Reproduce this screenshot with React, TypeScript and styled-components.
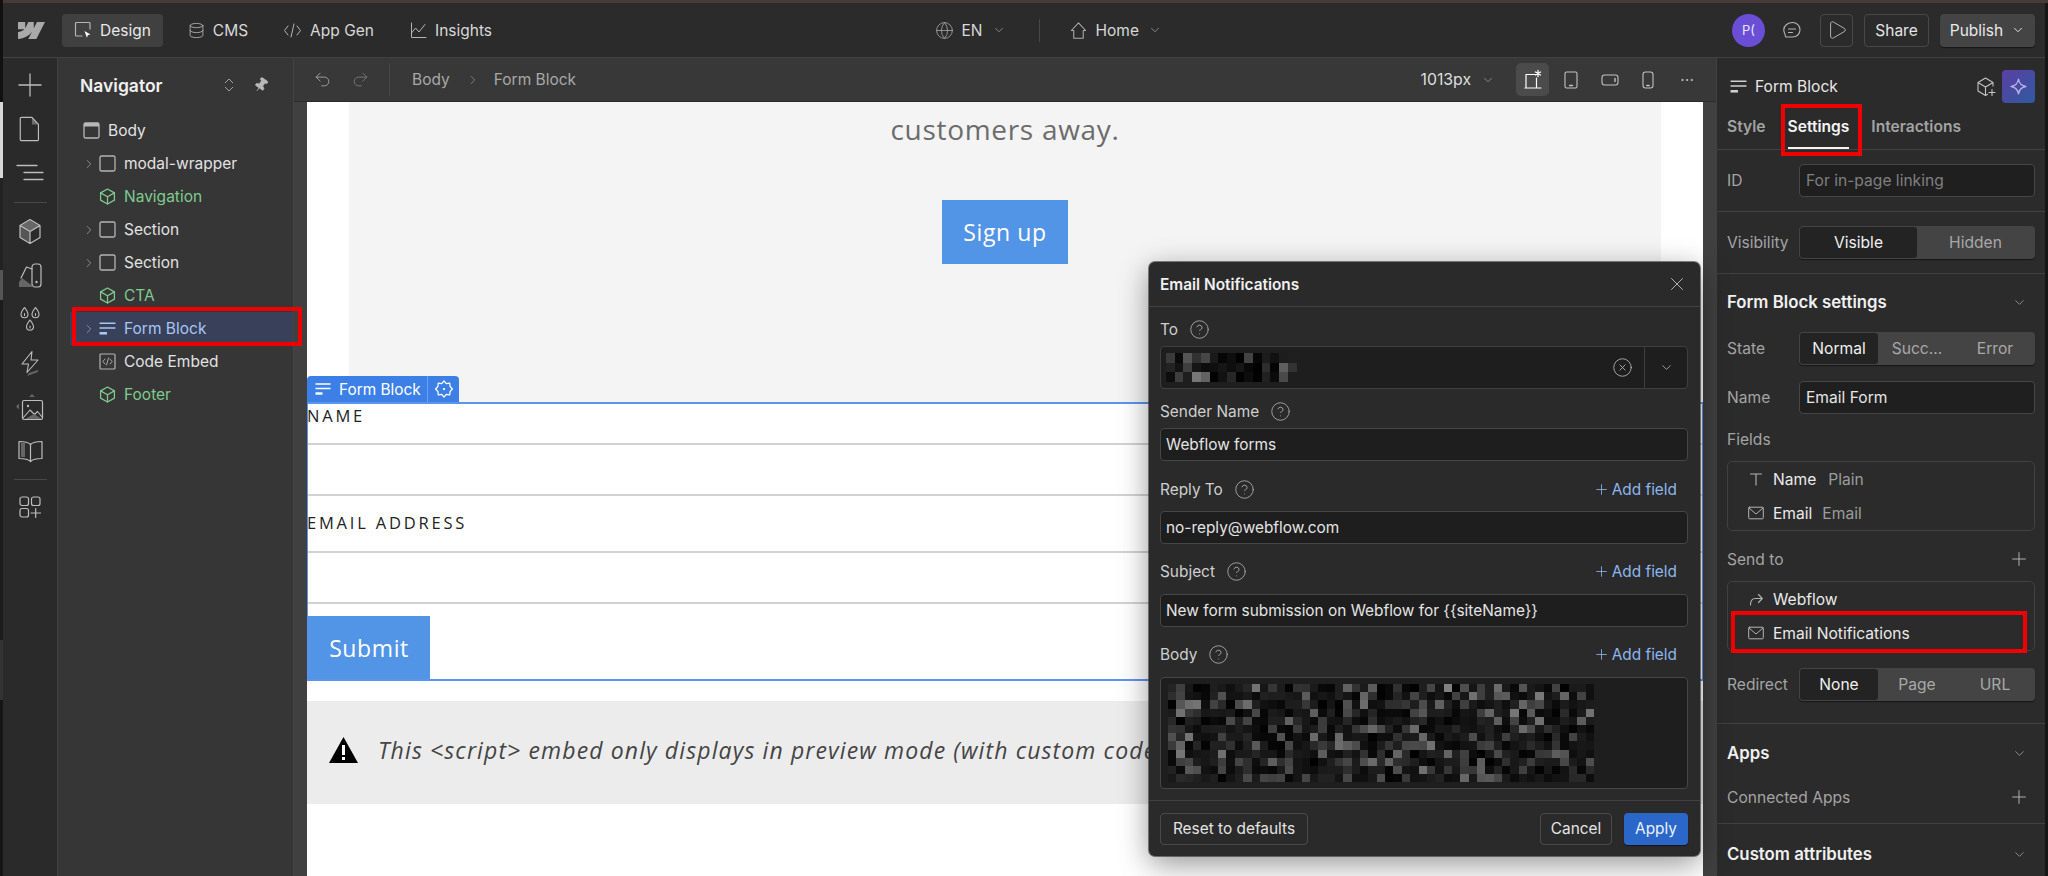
import React from "react";
import styled, { createGlobalStyle } from "styled-components";
import {
  Database, Globe, ChevronDown, ChevronRight, ChevronsUpDown, Undo2, Redo2, Plus, X,
  CircleHelp, CircleX, Play, Pin, Ellipsis,
} from "lucide-react";

const GlobalStyle = createGlobalStyle`
  html, body { margin: 0; padding: 0; background: #1a1a1a; }
  * { box-sizing: border-box; }
  body { font-family: Inter, "Liberation Sans", sans-serif; font-size: 15.5px; color: #e6e6e6; -webkit-font-smoothing: antialiased; }
`;

const Shell = styled.div`
  position: relative; width: 2048px; height: 876px; overflow: hidden;
  display: flex; flex-direction: column; background: #161616;
  &::before {
    content: ""; position: absolute; left: 0; top: 0; width: 3px; height: 100%;
    background: linear-gradient(#111 0 102px, #d8d8d8 102px 178px, #222 178px 270px, #555 270px 300px, #1c1c1c 300px 640px, #333 640px 700px, #161616 700px);
  }
`;
const TopStrip = styled.div`height: 3px; background: #4b3838; flex: none;`;
const Frame = styled.div`flex: 1; min-height: 0; display: flex; flex-direction: column; padding: 0 3px;`;

/* top bar */
const TopBar = styled.header`
  height: 55px; flex: none; display: flex; align-items: center; background: #2b2b2b; border-bottom: 1px solid #414141;
`;
const LeftGroup = styled.div`width: 931.5px; flex: none; display: flex; align-items: center; padding-left: 15px;`;
const LogoSlot = styled.div`width: 27px; height: 17px; color: #a9a9a9; margin-right: 17px; display: flex;`;
const ModeButton = styled.div<{ $active?: boolean; $w: number }>`
  width: ${p => p.$w}px; height: 33px; border-radius: 4px; display: flex; align-items: center; justify-content: center; gap: 8px;
  background: ${p => (p.$active ? "#404040" : "transparent")}; color: ${p => (p.$active ? "#e8e8e8" : "#d8d8d8")};
  font-size: 15.5px;
  svg { color: #b4b4b4; flex: none; }
`;
const CenterGroup = styled.div`display: flex; align-items: center; color: #d8d8d8; font-size: 15.5px; svg { color: #aaa; flex: none; }`;
const CenterText = styled.span<{ $ml: number }>`margin: 0 9px 0 ${p => p.$ml}px;`;
const VRule = styled.div`width: 1px; height: 23px; background: #484848; margin: 0 29px 0 33px;`;
const RightGroup = styled.div`margin-left: auto; display: flex; align-items: center; padding-right: 10px;`;
const Avatar = styled.div`
  width: 33px; height: 33px; border-radius: 50%; background: #6a4fd6; color: #e9e6fb; font-size: 13px;
  display: flex; align-items: center; justify-content: center; margin-right: 17px;
`;
const CommentSlot = styled.div`width: 20px; display: flex; color: #b6b6b6; margin-right: 18px;`;
const GhostButton = styled.div<{ $w: number; $ml?: number }>`
  width: ${p => p.$w}px; height: 33px; border: 1px solid #484848; border-radius: 4px; margin-left: ${p => p.$ml ?? 0}px;
  display: flex; align-items: center; justify-content: center; color: #e4e4e4; font-size: 15.5px; svg { color: #bdbdbd; }
`;
const PublishButton = styled.div`
  width: 95px; height: 33px; border-radius: 4px; background: #444; margin-left: 11px; box-shadow: 0 1px 1px rgba(0,0,0,.5);
  display: flex; align-items: center; justify-content: center; gap: 8px; color: #e8e8e8; font-size: 15.5px;
`;

const Main = styled.div`flex: 1; min-height: 0; display: flex;`;

/* rail */
const Rail = styled.nav`
  width: 55px; flex: none; background: #2a2a2a; border-right: 1px solid #414141; padding-top: 5px;
  display: flex; flex-direction: column; align-items: center;
`;
const RailItem = styled.div`height: 44px; width: 100%; display: flex; align-items: center; justify-content: center; color: #bdbdbd;`;
const RailRule = styled.div<{ $h: number }>`
  height: ${p => p.$h}px; width: 33px; display: flex; align-items: center;
  &::after { content: ""; display: block; width: 100%; height: 1px; background: #484848; }
`;

/* navigator */
const Navigator = styled.aside`
  width: 236px; flex: none; background: #363636; border-right: 1px solid #444; position: relative; z-index: 3;
`;
const NavHeader = styled.div`height: 56px; display: flex; align-items: center; padding: 0 24px 2px 22px; gap: 15px; color: #b8b8b8;`;
const NavTitle = styled.div`flex: 1; font-size: 17.5px; font-weight: 600; color: #f0f0f0;`;
const PinSlot = styled.div`display: flex; transform: rotate(35deg);`;
const TreeRow = styled.div<{ $selected?: boolean; $tone?: "green" }>`
  position: relative; height: 33px; margin-left: 12px; display: flex; align-items: center; font-size: 15.5px;
  color: ${p => (p.$selected ? "#a9c6f4" : p.$tone === "green" ? "#7fcb8f" : "#e2e2e2")};
  background: ${p => (p.$selected ? "#38405a" : "transparent")};
  svg { flex: none; }
`;
const CaretSlot = styled.div`width: 16px; margin-left: 11px; margin-right: 2px; display: flex; justify-content: center; color: #a6a6a6;`;
const TreeIcon = styled.div<{ $root?: boolean }>`
  width: 17px; height: 17px; display: flex; margin-right: 8px; margin-left: ${p => (p.$root ? "-16px" : "0")};
  color: ${p => (p.$root ? "#b8b8b8" : "inherit")};
`;
const PlainTreeIcon = styled(TreeIcon)<{ $gray?: boolean }>`color: ${p => (p.$gray ? "#b4b4b4" : "inherit")};`;
const NavRedMark = styled.div`position: absolute; left: 2px; right: -9px; top: -5px; bottom: -1px; border: 4px solid #f00000;`;

/* canvas */
const CanvasColumn = styled.section`flex: 1; min-width: 0; display: flex; flex-direction: column; background: #404040;`;
const CanvasBar = styled.div`
  height: 44px; flex: none; background: #383838; border-bottom: 1px solid #2a2a2a; display: flex; align-items: center;
  padding: 0 13px 0 19px; color: #a8a8a8; font-size: 15.5px;
`;
const BarIcon = styled.div<{ $w: number; $dim?: boolean }>`
  width: ${p => p.$w}px; display: flex; color: ${p => (p.$dim ? "#7e7e7e" : "#aaa")};
`;
const BarRule = styled.div`width: 1px; height: 33px; background: #484848; margin: 0 22px 0 19px;`;
const Crumb = styled.span``;
const CrumbSep = styled.div`display: flex; margin: 0 14px 0 16px; color: #9c9c9c;`;
const BarSpacer = styled.div`flex: 1;`;
const WidthLabel = styled.span`color: #dfdfdf; font-size: 15.8px; margin-right: 10px;`;
const WidthCaret = styled.div`display: flex; margin-right: 21px; color: #a8a8a8;`;
const DeviceButton = styled.div<{ $active?: boolean; $w: number }>`
  width: ${p => p.$w}px; height: 33px; border-radius: 5px; display: flex; align-items: center; justify-content: center;
  background: ${p => (p.$active ? "#4b4b4b" : "transparent")}; color: ${p => (p.$active ? "#fff" : "#c2c2c2")};
`;
const Gutter = styled.div`flex: 1; min-height: 0; padding: 0 13px; display: flex;`;
const Page = styled.main`flex: 1; background: #fff; display: flex; flex-direction: column; font-family: "Open Sans", Inter, sans-serif;`;
const Hero = styled.div`
  height: 300px; flex: none; margin: 0 42px 0 42px; background: #f4f4f4; padding-top: 8px;
  display: flex; flex-direction: column; align-items: center;
`;
const HeroText = styled.div`height: 38px; line-height: 38px; font-size: 28px; color: #6c6c6c; letter-spacing: .7px;`;
const SignUp = styled.div`
  margin-top: 52px; width: 126px; height: 64px; background: #5294e6; color: #fff; font-size: 23px;
  display: flex; align-items: center; justify-content: center; letter-spacing: .6px;
`;
const FormBlock = styled.form`
  position: relative; height: 279px; flex: none; border: 2px solid #5c94ec; border-width: 2px 1px 2px 1px; margin: 0;
  display: flex; flex-direction: column;
`;
const FormTag = styled.div`
  position: absolute; left: -1px; top: -28px; height: 26px; border-radius: 4px 4px 0 0; background: #3c7fe6; color: #fff;
  display: flex; align-items: center; font-family: Inter, sans-serif; font-size: 15.4px;
`;
const FormTagMain = styled.div`width: 121px; display: flex; align-items: center; gap: 8px; padding-left: 8px; height: 100%; border-right: 1px solid #6ea0ee;`;
const FormTagGear = styled.div`width: 31px; display: flex; justify-content: center;`;
const FieldLabel = styled.label<{ $pt: number; $pb: number }>`
  display: block; margin-left: -1px; padding: ${p => p.$pt}px 0 ${p => p.$pb}px; line-height: 22px; font-size: 16.5px; color: #222;
  letter-spacing: 2.8px;
`;
const FieldInput = styled.div`height: 53px; border-top: 2px solid #d2d2d2; border-bottom: 2px solid #d2d2d2; flex: none;`;
const Submit = styled.div`
  margin: 12px 0 0 0; width: 122px; height: 64px; background: #5294e6; color: #fff; font-size: 23px;
  display: flex; align-items: center; justify-content: center; letter-spacing: .6px;
`;
const Notice = styled.div`
  margin-top: 20px; height: 103px; flex: none; background: #ececec; display: flex; align-items: center; padding: 0 0 0 22px;
  overflow: hidden; white-space: nowrap; color: #444; font-size: 23px; font-style: italic;
`;
const NoticeIcon = styled.div`width: 29px; height: 26px; margin-right: 20px; margin-top: -5px; color: #000; flex: none; display: flex;`;
const NoticeText = styled.div`margin-top: -5px; letter-spacing: 1.12px;`;

/* right panel */
const Panel = styled.aside`width: 329px; flex: none; background: #2b2b2b; border-left: 1px solid #414141; display: flex; flex-direction: column; font-size: 15.6px;`;
const PanelHead = styled.div`height: 46px; flex: none; display: flex; align-items: center; padding: 11px 10px 0 13px; color: #e8e8e8; font-size: 15.6px;`;
const PanelHeadIcon = styled.div`width: 17px; display: flex; margin-right: 8px; color: #d0d0d0;`;
const PanelHeadTitle = styled.div`flex: 1;`;
const CubePlusSlot = styled.div`width: 20px; display: flex; margin-right: 6px; color: #c4c4c4;`;
const SparkleButton = styled.div`
  width: 33px; height: 33px; border-radius: 4px; background: linear-gradient(135deg, #5c3fa4, #2f5a9e); color: #b9b0e6;
  display: flex; align-items: center; justify-content: center;
`;
const Tabs = styled.div`height: 46px; flex: none; display: flex; padding: 0 0 0 10px; border-bottom: 1px solid #414141; gap: 22px;`;
const Tab = styled.div<{ $active?: boolean }>`
  position: relative; height: 45px; padding-top: 14px; line-height: 18px; font-size: 15.6px; font-weight: 600;
  color: ${p => (p.$active ? "#f4f4f4" : "#a4a4a4")};
  ${p => p.$active && `&::after { content: ""; position: absolute; left: 0; right: 0; bottom: 0; height: 2px; background: #f4f4f4; }`}
`;
const TabRedMark = styled.div`position: absolute; left: -7px; right: -13px; top: 0; bottom: -7px; border: 4px solid #f00000;`;
const Section = styled.div<{ $pt: number; $pb: number; $flat?: boolean }>`
  padding: ${p => p.$pt}px 10px ${p => p.$pb}px 10px; flex: none;
  border-bottom: ${p => (p.$flat ? "none" : "1px solid #414141")};
`;
const Row = styled.div<{ $mt?: number }>`display: flex; align-items: center; margin-top: ${p => p.$mt ?? 0}px;`;
const RowLabel = styled.div`width: 72px; flex: none; color: #a4a4a4; white-space: nowrap;`;
const TextBox = styled.div<{ $muted?: boolean }>`
  flex: 1; height: 33px; background: #1f1f1f; border: 1px solid #464646; border-radius: 4px; padding: 0 6px; display: flex; align-items: center;
  color: ${p => (p.$muted ? "#7f7f7f" : "#e6e6e6")};
`;
const Seg = styled.div`
  flex: 1; height: 33px; display: flex; padding: 1px; border-radius: 4px; background: #444; box-shadow: 0 1px 1px rgba(0,0,0,.5);
`;
const SegItem = styled.div<{ $active?: boolean }>`
  flex: 1 1 0; border-radius: 3px; display: flex; align-items: center; justify-content: center;
  background: ${p => (p.$active ? "#232323" : "transparent")}; color: ${p => (p.$active ? "#f0f0f0" : "#a8a8a8")};
`;
const SectionHead = styled.div`
  display: flex; align-items: center; justify-content: space-between; height: 22px; padding-right: 8px; color: #f0f0f0; font-size: 16.8px; font-weight: 600;
  svg { color: #a8a8a8; }
`;
const SubLabelRow = styled.div<{ $mt: number }>`
  height: 22px; display: flex; align-items: center; justify-content: space-between; padding-right: 8px; color: #a4a4a4; margin-top: ${p => p.$mt}px;
  svg { color: #bcbcbc; margin-right: -3px; }
`;
const ListBox = styled.div<{ $mt: number }>`
  position: relative; height: 70px; margin-top: ${p => p.$mt}px; border: 1px solid #414141; border-radius: 5px; display: flex; flex-direction: column;
`;
const ListRow = styled.div`flex: 1; display: flex; align-items: center; padding-left: 20px; color: #eaeaea;`;
const ListIcon = styled.div`width: 16px; height: 16px; display: flex; margin-right: 9px; color: #b4b4b4;`;
const ListMeta = styled.span<{ $ml: number }>`color: #9c9c9c; margin-left: ${p => p.$ml}px;`;
const ListRedMark = styled.div`position: absolute; left: 3px; right: 7px; top: 29px; bottom: -3px; border: 4px solid #f00000;`;

/* modal */
const Modal = styled.div`
  position: absolute; left: 1149px; top: 262px; width: 551px; height: 594px; background: #2a2a2a; border-radius: 6px;
  box-shadow: 0 8px 30px rgba(0,0,0,.42), 0 0 0 1px rgba(60,60,60,.6); display: flex; flex-direction: column; z-index: 5; font-size: 15.4px;
`;
const ModalHead = styled.div`
  height: 45px; flex: none; display: flex; align-items: center; justify-content: space-between; padding: 0 12px 0 11px; border-bottom: 1px solid #414141;
  font-size: 15.4px; font-weight: 600; color: #f0f0f0; svg { color: #bdbdbd; }
`;
const ModalBody = styled.div`flex: 1; padding: 0 12px 0 11px; display: flex; flex-direction: column;`;
const MLabelRow = styled.div<{ $mt: number; $mb: number }>`
  height: 22px; flex: none; display: flex; align-items: center; margin-top: ${p => p.$mt}px; margin-bottom: ${p => p.$mb}px;
  color: #cfcfcf; > svg { color: #b4b4b4; margin-left: 11px; flex: none; }
`;
const AddField = styled.div`margin-left: auto; padding-right: 11px; color: #8db6ee; display: flex; align-items: center; gap: 5px;`;
const MInput = styled.div`
  height: 33px; flex: none; background: #1e1e1e; border: 1px solid #464646; border-radius: 4px; padding: 0 5px; display: flex; align-items: center;
  color: #e4e4e4;
`;
const MSelect = styled.div`
  position: relative; height: 43px; flex: none; background: #1e1e1e; border: 1px solid #3f3f3f; border-radius: 4px; display: flex; align-items: center;
`;
const MSelectValue = styled.div`flex: 1; display: flex; align-items: center; padding-left: 5px; svg { display: block; }`;
const MSelectClear = styled.div`display: flex; margin-right: 11px; color: #bdbdbd;`;
const MSelectCaret = styled.div`width: 43px; height: 100%; border-left: 1px solid #3f3f3f; display: flex; align-items: center; justify-content: center; color: #b8b8b8;`;
const MArea = styled.div`
  height: 112px; flex: none; background: #1e1e1e; border: 1px solid #464646; border-radius: 4px; padding: 6px 0 0 7px;
  svg { display: block; }
`;
const ModalFoot = styled.div`
  height: 56px; flex: none; border-top: 1px solid #414141; padding: 0 12px 0 11px; display: flex; align-items: center; gap: 12px;
`;
const FootButton = styled.div<{ $w: number }>`
  width: ${p => p.$w}px; height: 32px; border: 1px solid #4a4a4a; border-radius: 4px; display: flex; align-items: center; justify-content: center;
  color: #e4e4e4;
`;
const FootSpacer = styled.div`flex: 1;`;
const ApplyButton = styled.div`
  width: 64px; height: 32px; border-radius: 4px; background: #2a67c9; box-shadow: 0 1px 1px rgba(0,0,0,.5); display: flex; align-items: center; justify-content: center;
  color: #eaf1fd;
`;

/* drawings */
const Svg: React.FC<{ s?: number; w?: number; h?: number; vb?: string; children: React.ReactNode; sw?: number }> = ({ s = 16, w, h, vb = "0 0 16 16", children, sw = 1 }) => (
  <svg width={w ?? s} height={h ?? s} viewBox={vb} fill="none" stroke="currentColor" strokeWidth={sw} strokeLinecap="round" strokeLinejoin="round">{children}</svg>
);
const FormLines = ({ s = 17 }: { s?: number }) => (
  <Svg s={s}><path d="M.5 3h15M.5 7.5h15" strokeLinecap="butt" strokeWidth={1.4} /><path d="M.5 12.5h7" strokeLinecap="butt" strokeWidth={2.4} /></Svg>
);
const Square = () => <Svg s={17} vb="0 0 17 17"><rect x="1" y="1" width="15" height="15" rx="1.5" strokeWidth={1.3} /></Svg>;
const Cube = ({ s = 17 }: { s?: number }) => (
  <Svg s={s} sw={1.2}><path d="M8 1l6.500 3.600v6.800L8 15l-6.500-3.600V4.600z" /><path d="M1.500 4.600L8 8.200l6.500-3.600M8 8.200V15" /></Svg>
);
const BodyIcon = () => (
  <Svg s={17} vb="0 0 17 17"><rect x="1" y="1" width="15" height="15" rx="1.5" strokeWidth={1.3} /><rect x="1" y="1" width="15" height="3.500" fill="currentColor" stroke="none" /></Svg>
);
const MailIcon = () => <Svg s={16}><rect x=".7" y="2.2" width="14.6" height="11.6" rx="1" /><path d="M1 3l7 6 7-6" /></Svg>;
const Help = () => <CircleHelp size={21} strokeWidth={.95} />;
const Caret = () => <ChevronRight size={14} strokeWidth={1.3} />;
const AddGlyph = () => <Svg s={11} sw={1.2}><path d="M8 1v14M1 8h14" /></Svg>;

function mosaic(cols: number, rows: number, cw: number, ch: number, seed: number, hi: number) {
  let x = seed;
  const next = () => { x = (x * 16807) % 2147483647; return (x % 1000) / 1000; };
  const cells: React.ReactNode[] = [];
  for (let r = 0; r < rows; r++) for (let c = 0; c < cols; c++) {
    const n = next();
    const v = Math.round(n * n * n * n * hi + next() * 32);
    cells.push(<rect key={r + "-" + c} x={c * cw} y={r * ch} width={cw} height={ch} fill={`rgb(${v},${v},${v})`} />);
  }
  return <svg width={cols * cw} height={rows * ch} shapeRendering="crispEdges">{cells}</svg>;
}

export default function App() {
  return (
    <Shell>
      <GlobalStyle />
      <TopStrip />
      <Frame>
        <TopBar>
          <LeftGroup>
            <LogoSlot>
              <svg width="27" height="17" viewBox="0 0 1080 675" fill="currentColor"><path d="M1080 0 735 675H411L555 395h-6C430 550 252 652 0 675V399s162-10 257-110H0V0h288v238h6L412 0h219v236h6L760 0z" /></svg>
            </LogoSlot>
            <ModeButton $active $w={101}>
              <Svg s={18} vb="0 0 18 18"><path d="M16 8V2.500a1 1 0 0 0-1-1H2.500a1 1 0 0 0-1 1V14a1 1 0 0 0 1 1H8" strokeWidth={1.2} /><path d="M10.500 10l6 3.400-2.600.7-1 2.600z" fill="#fff" stroke="none" /></Svg>
              Design
            </ModeButton>
            <ModeButton $w={110}><Database size={17} strokeWidth={1.2} />CMS</ModeButton>
            <ModeButton $w={111}>
              <Svg s={19} vb="0 0 19 19"><path d="M5 5L1.500 9.500 5 14M14 5l3.500 4.500L14 14M11 3L8 16" /></Svg>
              App Gen
            </ModeButton>
            <ModeButton $w={134}>
              <Svg s={17} vb="0 0 17 17"><path d="M1.500 1v14.500H16" /><path d="M1.500 11l4-5 3.500 4 6-7.500" /></Svg>
              Insights
            </ModeButton>
          </LeftGroup>
          <CenterGroup>
            <Globe size={19} strokeWidth={1} />
            <CenterText $ml={8}>EN</CenterText>
            <ChevronDown size={14} strokeWidth={1.2} />
            <VRule />
            <Svg s={19}><path d="M8 1.500l6 6.500h-2v6.500H4V8H2zM4 14.500h8" strokeWidth={.9} /></Svg>
            <CenterText $ml={8}>Home</CenterText>
            <ChevronDown size={14} strokeWidth={1.2} />
          </CenterGroup>
          <RightGroup>
            <Avatar>P(</Avatar>
            <CommentSlot>
              <Svg s={20} vb="0 0 20 20"><path d="M10.500 2.500c4.300 0 7.500 3 7.500 7.300s-3.200 7.200-7.500 7.200H4.500c-.8 0-1.300-.5-1.200-1.300.1-.9-.4-1.800-.8-2.700C2.100 12 1.800 11 1.800 9.800c0-4.300 4.400-7.300 8.700-7.300z" strokeWidth={1.1} /><path d="M6.500 9h7M6.500 12.500h4" strokeWidth={1.1} /></Svg>
            </CommentSlot>
            <GhostButton $w={33}><Play size={22} strokeWidth={1} /></GhostButton>
            <GhostButton $w={65} $ml={11}>Share</GhostButton>
            <PublishButton>Publish<ChevronDown size={14} strokeWidth={1.6} /></PublishButton>
          </RightGroup>
        </TopBar>
        <Main>
          <Rail>
            <RailItem><Plus size={38} strokeWidth={.8} /></RailItem>
            <RailItem>
              <Svg w={22} h={26} vb="0 0 16 20"><path d="M1.500 1h8l5 5.500V18a1 1 0 0 1-1 1h-12a1 1 0 0 1-1-1V2a1 1 0 0 1 1-1z" strokeWidth={.9} /><path d="M9.500 1l5 5.500h-5z" fill="currentColor" opacity=".45" stroke="none" /></Svg>
            </RailItem>
            <RailItem>
              <Svg w={28} h={18} vb="0 0 28 18"><path d="M1 1.500h20M8 8.500h19M8 15.500h19" strokeWidth={1.3} /></Svg>
            </RailItem>
            <RailRule $h={14} />
            <RailItem>
              <Svg w={24} h={27} vb="0 0 24 27">
                <path d="M12 14L2 8.200 12 2l10 6.200z" fill="#666" stroke="none" /><path d="M2 8.500L12 14v11L2 19.500z" fill="#555" stroke="none" />
                <path d="M12 1.500l10 6V19.500l-10 6-10-6V7.500zM2 7.500l10 6 10-6M12 13.500v12" strokeWidth={1.2} />
              </Svg>
            </RailItem>
            <RailItem>
              <Svg w={25} h={25} vb="0 0 25 25">
                <rect x="14" y="1" width="9" height="23" rx="3" strokeWidth={1.2} /><circle cx="18.500" cy="19" r="1.200" fill="currentColor" stroke="none" />
                <path d="M14 6L8.500 4 3 15" strokeWidth={1.2} /><path d="M1 24v-5l3-4 12 9z" fill="#666" stroke="none" />
              </Svg>
            </RailItem>
            <RailItem>
              <Svg w={24} h={27} vb="0 0 24 27" sw={1.1}>
                <path d="M6.500 1.500c-2 2.700-3.500 4.500-3.500 6.700a3.500 3.500 0 0 0 7 0c0-2.200-1.500-4-3.500-6.700zM17.500 1.500c-2 2.700-3.500 4.500-3.500 6.700a3.500 3.500 0 0 0 7 0c0-2.200-1.500-4-3.500-6.700zM12 14c-2 2.700-3.500 4.500-3.500 6.700a3.500 3.500 0 0 0 7 0c0-2.200-1.500-4-3.500-6.700z" />
                <path d="M6.500 9.500v-2M17.500 9.500v-2M12 22v-2" />
              </Svg>
            </RailItem>
            <RailItem>
              <Svg w={22} h={27} vb="0 0 22 27" sw={1.1}>
                <path d="M13 1.500L3 14h6.500L8 22.500 19 10h-7z" /><path d="M8 26l11-4v-2l-9 3z" fill="#666" stroke="none" />
              </Svg>
            </RailItem>
            <RailItem>
              <Svg w={28} h={27} vb="0 0 28 27">
                <rect x="6.500" y="6.500" width="20" height="19" rx="1.500" strokeWidth={1.2} /><circle cx="12" cy="12" r="1.200" fill="currentColor" stroke="none" />
                <path d="M7 24l7-8 4.500 4.500 3-3 5 6" strokeWidth={1.1} /><path d="M13 3l3-3 3 3zM3 9.500L0 12.500l3 3z" fill="#666" stroke="none" /><path d="M9 25l9-5 8 5z" fill="#666" stroke="none" />
              </Svg>
            </RailItem>
            <RailItem>
              <Svg w={25} h={23} vb="0 0 25 23">
                <path d="M12.500 4.500C10 2 6 1.500 1 1.500v17c5 0 9 .5 11.500 3 2.500-2.500 6.500-3 11.500-3v-17c-5 0-9 .5-11.500 3zM12.500 4.500v17" strokeWidth={1.2} />
                <path d="M3 3h4v14H3z" fill="#666" stroke="none" />
              </Svg>
            </RailItem>
            <RailRule $h={12} />
            <RailItem>
              <Svg w={22} h={22} vb="0 0 22 22">
                <rect x="1" y="1" width="8.500" height="8.500" rx="2" strokeWidth={1.2} /><rect x="12.500" y="1" width="8.500" height="8.500" rx="2" strokeWidth={1.2} /><rect x="1" y="12.500" width="8.500" height="8.500" rx="2" strokeWidth={1.2} />
                <path d="M12 17h9.500M16.700 12.500v9" strokeWidth={1.2} />
              </Svg>
            </RailItem>
          </Rail>
          <Navigator>
            <NavHeader>
              <NavTitle>Navigator</NavTitle>
              <ChevronsUpDown size={18} strokeWidth={1.1} />
              <PinSlot><Pin size={16} strokeWidth={1.2} fill="currentColor" /></PinSlot>
            </NavHeader>
            <TreeRow><CaretSlot /><TreeIcon $root><BodyIcon /></TreeIcon>Body</TreeRow>
            <TreeRow><CaretSlot><Caret /></CaretSlot><PlainTreeIcon $gray><Square /></PlainTreeIcon>modal-wrapper</TreeRow>
            <TreeRow $tone="green"><CaretSlot /><PlainTreeIcon><Cube /></PlainTreeIcon>Navigation</TreeRow>
            <TreeRow><CaretSlot><Caret /></CaretSlot><PlainTreeIcon $gray><Square /></PlainTreeIcon>Section</TreeRow>
            <TreeRow><CaretSlot><Caret /></CaretSlot><PlainTreeIcon $gray><Square /></PlainTreeIcon>Section</TreeRow>
            <TreeRow $tone="green"><CaretSlot /><PlainTreeIcon><Cube /></PlainTreeIcon>CTA</TreeRow>
            <TreeRow $selected><CaretSlot><Caret /></CaretSlot><PlainTreeIcon><FormLines /></PlainTreeIcon>Form Block<NavRedMark /></TreeRow>
            <TreeRow>
              <CaretSlot />
              <PlainTreeIcon $gray><Svg s={17} vb="0 0 17 17"><rect x="1" y="1" width="15" height="15" rx="1" strokeWidth={1.2} /><path d="M6 6L3.800 8.500 6 11M11 6l2.200 2.500L11 11M9.500 5L7.500 12" strokeWidth={.9} /></Svg></PlainTreeIcon>
              Code Embed
            </TreeRow>
            <TreeRow $tone="green"><CaretSlot /><PlainTreeIcon><Cube /></PlainTreeIcon>Footer</TreeRow>
          </Navigator>
          <CanvasColumn>
            <CanvasBar>
              <BarIcon $w={38}><Undo2 size={19} strokeWidth={1.1} /></BarIcon>
              <BarIcon $w={19} $dim><Redo2 size={19} strokeWidth={1.1} /></BarIcon>
              <BarRule />
              <Crumb>Body</Crumb>
              <CrumbSep><ChevronRight size={14} strokeWidth={1.2} /></CrumbSep>
              <Crumb>Form Block</Crumb>
              <BarSpacer />
              <WidthLabel>1013px</WidthLabel>
              <WidthCaret><ChevronDown size={14} strokeWidth={1.2} /></WidthCaret>
              <DeviceButton $active $w={33}>
                <Svg s={23} vb="0 0 23 23"><path d="M5 19V6.500h9M4 20h16M15.500 10V19" strokeWidth={1.2} /><path d="M17 2.500v6M14.500 4l5 3M19.500 4l-5 3" strokeWidth={1.3} /></Svg>
              </DeviceButton>
              <DeviceButton $w={44}><Svg w={14} h={18} vb="0 0 14 18"><rect x="1" y="1" width="12" height="16" rx="1.500" strokeWidth={1.1} /><path d="M5.500 14.500h3" strokeWidth={1.4} /></Svg></DeviceButton>
              <DeviceButton $w={33}><Svg w={18} h={12} vb="0 0 18 12"><rect x="1" y="1" width="16" height="10" rx="2.500" strokeWidth={1.1} /><path d="M14 4.500v3" strokeWidth={1.4} /></Svg></DeviceButton>
              <DeviceButton $w={44}><Svg w={12} h={18} vb="0 0 12 18"><rect x="1" y="1" width="10" height="16" rx="2.500" strokeWidth={1.1} /><path d="M4.800 14.500h2.400" strokeWidth={1.4} /></Svg></DeviceButton>
              <DeviceButton $w={33}><Ellipsis size={16} strokeWidth={1.5} /></DeviceButton>
            </CanvasBar>
            <Gutter>
              <Page>
                <Hero>
                  <HeroText>customers away.</HeroText>
                  <SignUp>Sign up</SignUp>
                </Hero>
                <FormBlock>
                  <FormTag>
                    <FormTagMain><FormLines s={16} />Form Block</FormTagMain>
                    <FormTagGear>
                      <Svg s={18} sw={1.1}><path d="M8 .8l2 2.500 3.100-.6.300 3.100L15.500 8l-2.100 2.200-.3 3.100-3.100-.6L8 15.200l-2-2.500-3.100.6-.3-3.100L.5 8l2.100-2.200.3-3.100 3.100.6z" /><circle cx="8" cy="8" r="1" fill="currentColor" stroke="none" /></Svg>
                    </FormTagGear>
                  </FormTag>
                  <FieldLabel $pt={1} $pb={16}>NAME</FieldLabel>
                  <FieldInput />
                  <FieldLabel $pt={16} $pb={17}>EMAIL ADDRESS</FieldLabel>
                  <FieldInput />
                  <Submit>Submit</Submit>
                </FormBlock>
                <Notice>
                  <NoticeIcon>
                    <svg width="29" height="26" viewBox="0 0 29 26"><path d="M14.500 0L29 26H0z" fill="currentColor" /><path d="M13 8h3v10h-3zM13 20h3v3h-3z" fill="#fff" /></svg>
                  </NoticeIcon>
                  <NoticeText>{"This <script> embed only displays in preview mode (with custom code enabled)."}</NoticeText>
                </Notice>
              </Page>
            </Gutter>
          </CanvasColumn>
          <Panel>
            <PanelHead>
              <PanelHeadIcon><FormLines /></PanelHeadIcon>
              <PanelHeadTitle>Form Block</PanelHeadTitle>
              <CubePlusSlot>
                <Svg s={20} vb="0 0 20 20" sw={1.1}><path d="M17 9V5.500L9.500 1 2 5.500v8.500l7.500 4.500 2-1.200M2 5.500l7.500 4.500L17 5.500M9.500 10v8.500" /><path d="M16 12.500v6M13 15.500h6" /></Svg>
              </CubePlusSlot>
              <SparkleButton>
                <Svg s={17} sw={1.2}><path d="M8 1C8.700 5.300 10.700 7.300 15 8 10.700 8.700 8.700 10.700 8 15 7.300 10.700 5.300 8.700 1 8 5.300 7.300 7.300 5.300 8 1z" /></Svg>
              </SparkleButton>
            </PanelHead>
            <Tabs>
              <Tab>Style</Tab>
              <Tab $active>Settings<TabRedMark /></Tab>
              <Tab>Interactions</Tab>
            </Tabs>
            <Section $pt={14} $pb={14}>
              <Row><RowLabel>ID</RowLabel><TextBox $muted>For in-page linking</TextBox></Row>
            </Section>
            <Section $pt={14} $pb={14}>
              <Row><RowLabel>Visibility</RowLabel><Seg><SegItem $active>Visible</SegItem><SegItem>Hidden</SegItem></Seg></Row>
            </Section>
            <Section $pt={17} $pb={22}>
              <SectionHead>Form Block settings<ChevronDown size={15} strokeWidth={1.2} /></SectionHead>
              <Row $mt={19}><RowLabel>State</RowLabel><Seg><SegItem $active>Normal</SegItem><SegItem>Succ...</SegItem><SegItem>Error</SegItem></Seg></Row>
              <Row $mt={16}><RowLabel>Name</RowLabel><TextBox>Email Form</TextBox></Row>
              <SubLabelRow $mt={14}>Fields</SubLabelRow>
              <ListBox $mt={11}>
                <ListRow><ListIcon><Svg s={16}><path d="M2.500 3h11M8 3v11" strokeWidth={1.1} /></Svg></ListIcon>Name<ListMeta $ml={12}>Plain</ListMeta></ListRow>
                <ListRow><ListIcon><MailIcon /></ListIcon>Email<ListMeta $ml={10}>Email</ListMeta></ListRow>
              </ListBox>
              <SubLabelRow $mt={17}>Send to<Plus size={22} strokeWidth={1} /></SubLabelRow>
              <ListBox $mt={11}>
                <ListRow><ListIcon><Svg s={16}><path d="M2.500 14c0-4.500 1.500-6.500 5-6.500h6.500M10.500 3.500l3.800 4-3.800 4" strokeWidth={1.1} /></Svg></ListIcon>Webflow</ListRow>
                <ListRow><ListIcon><MailIcon /></ListIcon>Email Notifications</ListRow>
                <ListRedMark />
              </ListBox>
              <Row $mt={17}><RowLabel>Redirect</RowLabel><Seg><SegItem $active>None</SegItem><SegItem>Page</SegItem><SegItem>URL</SegItem></Seg></Row>
            </Section>
            <Section $pt={18} $pb={15}>
              <SectionHead>Apps<ChevronDown size={15} strokeWidth={1.2} /></SectionHead>
              <SubLabelRow $mt={22}>Connected Apps<Plus size={22} strokeWidth={1} /></SubLabelRow>
            </Section>
            <Section $pt={19} $pb={0} $flat>
              <SectionHead>Custom attributes<ChevronDown size={15} strokeWidth={1.2} /></SectionHead>
            </Section>
          </Panel>
        </Main>
      </Frame>
      <Modal>
        <ModalHead>Email Notifications<X size={22} strokeWidth={1} /></ModalHead>
        <ModalBody>
          <MLabelRow $mt={11} $mb={6}>To<Help /></MLabelRow>
          <MSelect>
            <MSelectValue>{mosaic(15, 3, 8.7, 9.7, 4711, 110)}</MSelectValue>
            <MSelectClear><CircleX size={21} strokeWidth={.95} /></MSelectClear>
            <MSelectCaret><ChevronDown size={15} strokeWidth={1.3} /></MSelectCaret>
          </MSelect>
          <MLabelRow $mt={11} $mb={6}>Sender Name<Help /></MLabelRow>
          <MInput>Webflow forms</MInput>
          <MLabelRow $mt={17} $mb={11}>Reply To<Help /><AddField><AddGlyph />Add field</AddField></MLabelRow>
          <MInput>no-reply@webflow.com</MInput>
          <MLabelRow $mt={16} $mb={12}>Subject<Help /><AddField><AddGlyph />Add field</AddField></MLabelRow>
          <MInput>{"New form submission on Webflow for {{siteName}}"}</MInput>
          <MLabelRow $mt={16} $mb={12}>Body<Help /><AddField><AddGlyph />Add field</AddField></MLabelRow>
          <MArea>{mosaic(51, 12, 8.35, 8.2, 90210, 100)}</MArea>
        </ModalBody>
        <ModalFoot>
          <FootButton $w={148}>Reset to defaults</FootButton>
          <FootSpacer />
          <FootButton $w={72}>Cancel</FootButton>
          <ApplyButton>Apply</ApplyButton>
        </ModalFoot>
      </Modal>
    </Shell>
  );
}
